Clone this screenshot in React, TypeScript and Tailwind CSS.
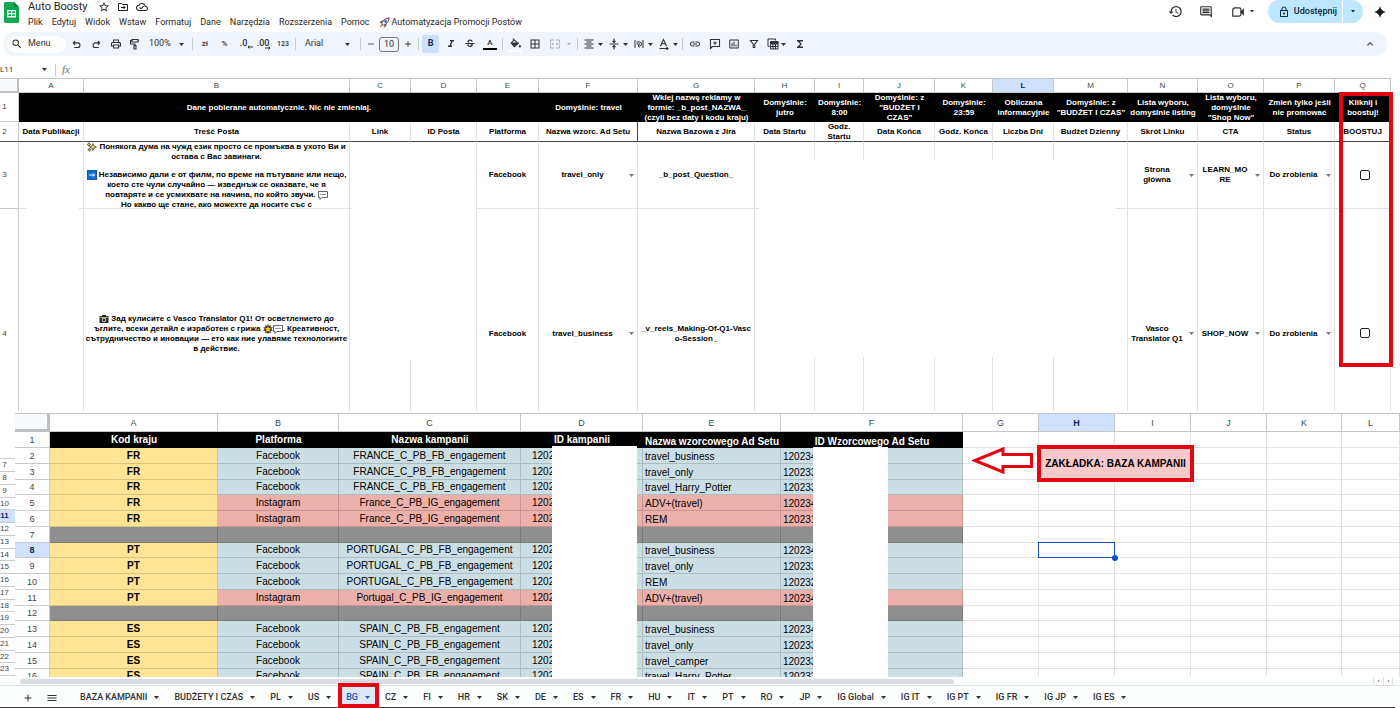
import React from 'react';
import {
  MdAdd,
  MdBorderAll,
  MdFormatAlignCenter,
  MdFormatItalic,
  MdFunctions,
  MdHistory,
  MdInsertChartOutlined,
  MdKeyboardArrowUp,
  MdLink,
  MdMenu,
  MdOutlineCloudDone,
  MdOutlineInsertComment,
  MdOutlineLock,
  MdOutlinePrint,
  MdRemove,
  MdSearch,
  MdStarOutline,
  MdStrikethroughS,
} from 'react-icons/md';

type SvgProps = { className?: string; children: React.ReactNode; box?: string };

function Svg({ className = 'size-3', children, box = '0 0 24 24' }: SvgProps) {
  return (
    <svg viewBox={box} className={className} fill="none" stroke="currentColor" strokeWidth="2" aria-hidden="true">
      {children}
    </svg>
  );
}

function Caret({ size = 'w-[5px]', className = '' }: { size?: string; className?: string }) {
  return (
    <svg viewBox="0 0 10 6" className={`shrink-0 ${size} ${className}`} fill="currentColor" aria-hidden="true">
      <path d="M0 0h10L5 6z" />
    </svg>
  );
}

function Divider({ className = 'mx-[2px]' }: { className?: string }) {
  return <span className={`h-3 w-px shrink-0 bg-[#c7cbd1] ${className}`} />;
}

function Tool({ label, className = 'w-5', children }: { label: string; className?: string; children: React.ReactNode }) {
  return (
    <button type="button" aria-label={label} className={`flex h-[18px] shrink-0 items-center justify-center ${className}`}>
      {children}
    </button>
  );
}

/* ---------- small drawings ---------- */

const SheetsLogo = () => (
  <svg viewBox="0 0 15 21" className="h-[21px] w-[15px]" aria-hidden="true">
    <path d="M1.5 0H10l5 5v14.5a1.5 1.5 0 0 1-1.5 1.5h-12A1.5 1.5 0 0 1 0 19.500v-18A1.500 1.500 0 0 1 1.500 0z" fill="#12a84f" />
    <path d="M10 0l5 5h-5z" fill="#0b7f3a" />
    <path d="M3 8h9v7.500H3z" fill="#fff" />
    <path d="M4.300 9.300h2.700v1.800H4.300zM8.100 9.300h2.700v1.800H8.100zM4.300 12.300h2.700v1.800H4.300zM8.100 12.300h2.700v1.800H8.100z" fill="#12a84f" />
  </svg>
);

const FolderMove = () => (
  <Svg className="size-3">
    <path d="M3 5h6l2 2h10v12H3z" />
    <path d="M8 13h8M13 10l3 3-3 3" />
  </Svg>
);

const Undo = () => (
  <Svg className="size-[11px]">
    <path d="M9 4L5 8.500l4 4.500M5 8.500h9.500a5 5 0 0 1 0 10H7" strokeWidth="2.400" />
  </Svg>
);

const Redo = () => (
  <Svg className="size-[11px]">
    <path d="M15 4l4 4.500-4 4.500M19 8.500H9.500a5 5 0 0 0 0 10H17" strokeWidth="2.400" />
  </Svg>
);

const PaintRoller = () => (
  <Svg className="size-3">
    <path d="M6 3h12v5H6zM6 5H3v7h9v3M10 15h4v7h-4zM18 5h2" strokeWidth="2.200" />
  </Svg>
);

const MergeCells = () => (
  <Svg className="size-3">
    <path d="M10 4H3v5M14 4h7v5M10 20H3v-5M14 20h7v-5M2 12h7M22 12h-7M7 10l2 2-2 2M17 10l-2 2 2 2" />
  </Svg>
);

const AlignMiddle = () => (
  <Svg className="size-3">
    <path d="M3 12h18M12 1v7M9 6l3 3 3-3M12 23v-7M9 18l3-3 3 3" strokeWidth="2.200" />
  </Svg>
);

const WrapText = () => (
  <Svg className="size-3">
    <path d="M4 4v16M20 4v16M7 12h7M7 8h6a4 4 0 0 1 0 8h-2M13 13l-3 3 3 3" />
  </Svg>
);

const RotateText = () => (
  <Svg className="size-3">
    <path d="M5 16L11 3l6 13M7.500 11.500h7M3 21h17M17 18l3 3-3 3" strokeWidth="2.200" />
  </Svg>
);

const PaintBucket = () => (
  <Svg className="size-[13px]">
    <path d="M7 3l10 9-7 6-6-7 6-6" />
    <path d="M5 11h11l-6 6z" fill="currentColor" />
    <path d="M20 14c1.500 2 2 2.800 2 3.500a2 2 0 0 1-4 0c0-.7.500-1.500 2-3.500z" fill="currentColor" stroke="none" />
  </Svg>
);

const AddComment = () => (
  <Svg className="size-3">
    <path d="M3 3h18v14H7l-4 4zM12 6.500v7M8.500 10h7" strokeWidth="2.200" />
  </Svg>
);

const Filter = () => (
  <Svg className="size-3">
    <path d="M5 5h14l-5.500 7.500V19h-3v-6.500z" strokeWidth="2.200" />
  </Svg>
);

const TableView = () => (
  <Svg className="size-3">
    <path d="M5 17H2V2h15v3" />
    <path d="M7 7h15v15H7zM7 12h15M12 12v10M17 12v10M7 17h15" />
    <path d="M7 7h15v4H7z" fill="currentColor" />
  </Svg>
);

const Camera = () => (
  <Svg className="size-[14px]">
    <path d="M7 5h7a3 3 0 0 1 3 3v8a3 3 0 0 1-3 3H3V9a4 4 0 0 1 4-4z" />
    <path d="M17 12l4-4v8z" fill="currentColor" />
  </Svg>
);

const Spark = () => (
  <svg viewBox="0 0 24 24" className="size-3" fill="#1b1c1d" aria-hidden="true">
    <path d="M12 0c1.200 6.500 5.500 10.800 12 12-6.500 1.200-10.800 5.500-12 12-1.200-6.500-5.500-10.800-12-12C6.500 10.800 10.800 6.500 12 0z" />
  </svg>
);

const Rocket = () => (
  <svg viewBox="0 0 20 20" className="size-[11px]" aria-hidden="true">
    <path d="M6 9L1.500 10.500 4 7.500l5-1zM11 14l-1.500 4.500 3-2.500 1-5z" fill="#c62828" stroke="#222" strokeWidth=".8" />
    <path d="M5 12C7 6 11 2.500 18.500 1.500 17.500 9 14 13 8 15z" fill="#e3eef5" stroke="#263845" strokeWidth="1.500" />
    <path d="M14 2.400c1.500-.5 3-.8 4.500-.9-.1 1.500-.4 3-.9 4.500z" fill="#e53935" />
    <circle cx="12" cy="8" r="2" fill="#1e88c8" stroke="#263845" />
    <path d="M5 13l-3 5 5-3z" fill="#f6a623" stroke="#b4521b" />
  </svg>
);

const emoji = 'inline-block h-[10px] w-[10px] align-top';

const Sparkles = () => (
  <svg viewBox="0 0 20 20" className={emoji} aria-hidden="true">
    <path d="M12 3l2 5 5 2-5 2-2 5-2-5-5-2 5-2z" fill="#ffd43b" stroke="#222" strokeWidth="1.300" />
    <path d="M4 1l1 2.500L8 5 5 6 4 9 3 6 0 5l3-1.500zM5 12l1 2.500 2.500 1L6 16.500 5 19l-1-2.500-2.500-1L4 14.500z" fill="#ffd43b" stroke="#222" strokeWidth="1.200" />
  </svg>
);

const ArrowSquare = () => (
  <svg viewBox="0 0 20 20" className={emoji} aria-hidden="true">
    <rect x=".7" y=".7" width="18.600" height="18.600" fill="#0b6fd6" stroke="#083a75" strokeWidth="1.400" />
    <path d="M4 10h11M12 7l3 3-3 3" stroke="#fff" strokeWidth="2" fill="none" />
  </svg>
);

const Speech = () => (
  <svg viewBox="0 0 20 20" className={emoji} aria-hidden="true">
    <path d="M1 3h18v12H8l-4 4v-4H1z" fill="#fff" stroke="#333" strokeWidth="1.500" />
    <path d="M5 9h2M9 9h2M13 9h2" stroke="#333" strokeWidth="2" />
  </svg>
);

const PhotoCamera = () => (
  <svg viewBox="0 0 20 20" className={emoji} aria-hidden="true">
    <path d="M1 4h5V2h8v2h5v14H1z" fill="#2b2b2b" />
    <path d="M2 6h16v2H2z" fill="#b8a56a" />
    <circle cx="10" cy="12" r="4.500" fill="#c9c9c9" />
    <circle cx="10" cy="12" r="2.500" fill="#222" />
  </svg>
);

const GlowStar = () => (
  <svg viewBox="0 0 20 20" className={emoji} aria-hidden="true">
    <path d="M10 0l2 4 4-2-1 4.500 5 .5-3.500 3 3.500 3-5 1 1 4.500-4-1.500-2 3.500-2-3.500-4 1.500 1-4.500-5-1 3.500-3L0 7l5-.5L4 2l4 2z" fill="#3a3320" />
    <path d="M10 4l1.800 4 4.200.5-3 3 .8 4.500-3.800-2-3.800 2 .8-4.500-3-3L8.200 8z" fill="#ffd400" />
  </svg>
);

/* ---------- application bar ---------- */

const menus = ['Plik', 'Edytuj', 'Widok', 'Wstaw', 'Formatuj', 'Dane', 'Narzędzia', 'Rozszerzenia', 'Pomoc'];

function AppBar() {
  return (
    <header className="flex shrink-0 items-start pl-1 text-[#1f1f1f]">
      <a href="#home" aria-label="Arkusze" className="mt-[2px] shrink-0">
        <SheetsLogo />
      </a>
      <div className="ml-[9px] min-w-0 flex-1">
        <div className="flex h-[14px] items-center">
          <h1 className="text-[11px] leading-[14px]">Auto Boosty</h1>
          <button type="button" aria-label="Oznacz gwiazdką" className="ml-[10px]"><MdStarOutline className="size-3" /></button>
          <button type="button" aria-label="Przenieś" className="ml-[7px]"><FolderMove /></button>
          <button type="button" aria-label="Stan dokumentu" className="ml-[7px]"><MdOutlineCloudDone className="size-3" /></button>
        </div>
        <nav className="flex h-4 items-center gap-[9px] text-[9px] leading-4 whitespace-nowrap">
          {menus.map((m) => (
            <button type="button" key={m}>{m}</button>
          ))}
          <button type="button" className="flex items-center gap-[2px]"><Rocket />Automatyzacja Promocji Postów</button>
        </nav>
      </div>
      <div className="flex h-[23px] shrink-0 items-center pr-[14px] text-[#303134]">
        <button type="button" aria-label="Historia"><MdHistory className="size-[15px]" /></button>
        <button type="button" aria-label="Komentarze" className="ml-4"><MdOutlineInsertComment className="size-[14px]" /></button>
        <button type="button" aria-label="Rozmowa wideo" className="ml-[18px] flex items-center gap-[5px]"><Camera /><Caret size="w-1" /></button>
        <div className="ml-[14px] flex h-[23px] items-center rounded-full bg-[#bfe6ff] text-[#06263d]">
          <button type="button" className="flex items-center gap-1 pl-[10px] pr-[5px] text-[9px] font-medium"><MdOutlineLock className="size-3" />Udostępnij</button>
          <span className="h-full w-px bg-white" />
          <button type="button" aria-label="Opcje udostępniania" className="flex w-5 items-center justify-center"><Caret size="w-1" /></button>
        </div>
        <button type="button" aria-label="Gemini" className="ml-[11px]"><Spark /></button>
      </div>
    </header>
  );
}

function Toolbar() {
  return (
    <div className="ml-[3px] mt-[2px] mr-[13px] flex h-6 shrink-0 items-center rounded-full bg-[#f0f4fc] pl-1 text-[9px] text-[#303134]">
      <button type="button" className="flex h-[17px] w-[59px] shrink-0 items-center gap-[5px] rounded-full bg-white pl-1"><MdSearch className="size-3" />Menu</button>
      <Tool label="Cofnij"><Undo /></Tool>
      <Tool label="Ponów"><Redo /></Tool>
      <Tool label="Drukuj" className="w-[19px]"><MdOutlinePrint className="size-3" /></Tool>
      <Tool label="Maluj format" className="w-[19px]"><PaintRoller /></Tool>
      <select aria-label="Powiększenie" className="ml-[5px] w-[28px] appearance-none bg-transparent text-[9px] outline-none"><option>100%</option></select>
      <Caret className="ml-[2px]" />
      <Divider className="ml-2 mr-[2px]" />
      <Tool label="Format walutowy"><span className="text-[8px] font-medium">zł</span></Tool>
      <Tool label="Format procentowy" className="w-[19px]"><span className="text-[8px] font-medium">%</span></Tool>
      <Tool label="Mniej miejsc dziesiętnych" className="relative w-[19px]">
        <span className="pb-[2px] text-[9px] leading-none font-medium">.0</span>
        <Svg className="absolute right-0 bottom-[3px] size-[6px]" box="0 0 12 12"><path d="M12 6H2M5 3L2 6l3 3" /></Svg>
      </Tool>
      <Tool label="Więcej miejsc dziesiętnych" className="relative w-5">
        <span className="pb-[2px] text-[9px] leading-none font-medium">.00</span>
        <Svg className="absolute right-[2px] bottom-[2px] size-[6px]" box="0 0 12 12"><path d="M0 6h10M7 3l3 3-3 3" /></Svg>
      </Tool>
      <Tool label="Więcej formatów"><span className="text-[7px] font-medium">123</span></Tool>
      <Divider />
      <select aria-label="Czcionka" className="ml-[7px] w-[38px] appearance-none bg-transparent text-[9px] outline-none"><option>Arial</option></select>
      <Caret className="ml-[2px]" />
      <Divider className="ml-[10px] mr-[2px]" />
      <Tool label="Zmniejsz czcionkę" className="w-4"><MdRemove className="size-[10px]" /></Tool>
      <input aria-label="Rozmiar czcionki" defaultValue="10" className="h-[15px] w-5 rounded-[3px] border border-[#747775] bg-transparent text-center text-[9px] outline-none" />
      <Tool label="Zwiększ czcionkę" className="w-[18px]"><MdAdd className="size-[10px]" /></Tool>
      <Divider className="mx-px" />
      <Tool label="Pogrubienie" className="mx-[2px] w-[17px] rounded-[2px] bg-[#cfe0fc]"><b className="text-[9px] text-[#0b2a5c]">B</b></Tool>
      <Tool label="Kursywa" className="w-[19px]"><MdFormatItalic className="size-3" /></Tool>
      <Tool label="Przekreślenie"><MdStrikethroughS className="size-3" /></Tool>
      <Tool label="Kolor tekstu"><span className="w-[14px] border-b-2 border-black text-center text-[8px] leading-[10px] font-medium">A</span></Tool>
      <Divider />
      <Tool label="Kolor wypełnienia"><span className="flex w-[13px] justify-center border-b-2 border-white"><PaintBucket /></span></Tool>
      <Tool label="Obramowanie"><MdBorderAll className="size-3" /></Tool>
      <Tool label="Scal komórki" className="w-[30px] gap-[6px] text-[#a9adb3]"><MergeCells /><Caret size="w-1" /></Tool>
      <Divider />
      <Tool label="Wyrównanie w poziomie" className="w-[25px] gap-[3px]"><MdFormatAlignCenter className="size-3" /><Caret /></Tool>
      <Tool label="Wyrównanie w pionie" className="w-[25px] gap-[3px]"><AlignMiddle /><Caret /></Tool>
      <Tool label="Zawijanie tekstu" className="w-[25px] gap-[3px]"><WrapText /><Caret /></Tool>
      <Tool label="Obrót tekstu" className="w-[25px] gap-[3px]"><RotateText /><Caret /></Tool>
      <Divider />
      <Tool label="Wstaw link"><MdLink className="size-3" /></Tool>
      <Tool label="Wstaw komentarz" className="w-[19px]"><AddComment /></Tool>
      <Tool label="Wstaw wykres"><MdInsertChartOutlined className="size-3" /></Tool>
      <Tool label="Utwórz filtr" className="w-[19px]"><Filter /></Tool>
      <Tool label="Widoki filtrów" className="w-[27px] gap-[2px]"><TableView /><Caret /></Tool>
      <Tool label="Funkcje" className="w-5"><MdFunctions className="size-3" /></Tool>
      <Tool label="Ukryj menu" className="mr-[7px] ml-auto w-5"><MdKeyboardArrowUp className="size-3" /></Tool>
    </div>
  );
}

function FormulaBar() {
  return (
    <div className="flex h-[22px] shrink-0 items-center pt-[5px] text-[8px] text-[#303134]">
      <input aria-label="Pole nazwy" defaultValue="L11" className="h-4 w-[42px] bg-transparent leading-4 outline-none" />
      <Caret />
      <Divider className="ml-2 mr-[6px]" />
      <span className="font-['Liberation_Serif',serif] text-[11px] text-[#6b6f74] italic">fx</span>
      <input aria-label="Formuła" className="ml-2 h-4 flex-1 bg-transparent outline-none" />
    </div>
  );
}

/* ---------- upper sheet ---------- */

const upperColumns: [string, string][] = [
  ['A', 'w-[65px]'], ['B', 'w-[266px]'], ['C', 'w-[61px]'], ['D', 'w-[66px]'], ['E', 'w-[62px]'], ['F', 'w-[99px]'],
  ['G', 'w-[117px]'], ['H', 'w-[60px]'], ['I', 'w-[49px]'], ['J', 'w-[71px]'], ['K', 'w-[58px]'], ['L', 'w-[61px]'],
  ['M', 'w-[74px]'], ['N', 'w-[70px]'], ['O', 'w-[66px]'], ['P', 'w-[71px]'], ['Q', 'w-[56px]'],
];

const hints: string[][] = [
  ['Domyślnie: travel'],
  ['Wklej nazwę reklamy w', 'formie: _b_post_NAZWA_', '(czyli bez daty i kodu kraju)'],
  ['Domyślnie:', 'jutro'],
  ['Domyślnie:', '8:00'],
  ['Domyślnie: z', '"BUDŻET I', 'CZAS"'],
  ['Domyślnie:', '23:59'],
  ['Obliczana', 'informacyjnie'],
  ['Domyślnie: z', '"BUDŻET I CZAS"'],
  ['Lista wyboru,', 'domyślnie listing'],
  ['Lista wyboru,', 'domyślnie', '"Shop Now"'],
  ['Zmień tylko jeśli', 'nie promować'],
  ['Kliknij i', 'boostuj!'],
];

const titles: string[][] = [
  ['Data Publikacji'], ['Treść Posta'], ['Link'], ['ID Posta'], ['Platforma'], ['Nazwa wzorc. Ad Setu'],
  ['Nazwa Bazowa z Jira'], ['Data Startu'], ['Godz.', 'Startu'], ['Data Końca'], ['Godz. Końca'], ['Liczba Dni'],
  ['Budżet Dzienny'], ['Skrót Linku'], ['CTA'], ['Status'], ['BOOSTUJ'],
];

function Lines({ lines }: { lines: React.ReactNode[] }) {
  return (
    <>
      {lines.map((l, i) => (
        <span key={i} className="block text-center whitespace-nowrap">{l}</span>
      ))}
    </>
  );
}

function Picker({ label, lines }: { label: string; lines: string[] }) {
  return (
    <div className="flex items-center gap-[3px] pr-[3px]">
      {lines.length > 1 ? (
        <button type="button" aria-haspopup="listbox" aria-label={label} className="min-w-0 flex-1 font-bold"><Lines lines={lines} /></button>
      ) : (
        <select aria-label={label} className="min-w-0 flex-1 appearance-none bg-transparent text-center font-bold outline-none [text-align-last:center]">
          <option>{lines[0]}</option>
        </select>
      )}
      <Caret className="text-[#777]" />
    </div>
  );
}

type Post = { n: number; text: React.ReactNode; adSet: string; name: string[]; link: string[]; cta: string[] };

const posts: Post[] = [
  {
    n: 3,
    text: (
      <div className="h-[66px]">
        <Lines lines={[<><Sparkles /> Понякога дума на чужд език просто се промъква в ухото Ви и</>, 'остава с Вас завинаги.']} />
        <div className="h-2" />
        <Lines
          lines={[
            <><ArrowSquare /> Независимо дали е от филм, по време на пътуване или нещо,</>,
            'което сте чули случайно — изведнъж се оказвате, че я',
            <>повтаряте и се усмихвате на начина, по който звучи. <Speech /></>,
            'Но какво ще стане, ако можехте да носите със с',
          ]}
        />
      </div>
    ),
    adSet: 'travel_only',
    name: ['_b_post_Question_'],
    link: ['Strona', 'główna'],
    cta: ['LEARN_MO', 'RE'],
  },
  {
    n: 4,
    text: (
      <Lines
        lines={[
          <><PhotoCamera /> Зад кулисите с Vasco Translator Q1! От осветлението до</>,
          <>ъглите, всеки детайл е изработен с грижа <GlowStar /><Speech />. Креативност,</>,
          'сътрудничество и иновации — ето как ние улавяме технологиите',
          'в действие.',
        ]}
      />
    ),
    adSet: 'travel_business',
    name: ['_v_reels_Making-Of-Q1-Vasc', 'o-Session_'],
    link: ['Vasco', 'Translator Q1'],
    cta: ['SHOP_NOW'],
  },
];

function UpperSheet() {
  const headCell = 'border-t border-r border-b border-[#c4c7c5] p-0 font-normal';
  const rowHead = 'border-r border-b border-[#c9cbce] p-0 pr-[9px] text-center font-normal text-[#444746]';
  const cell = 'border-r border-b border-[#e1e3e3] p-0';
  return (
    <section className="relative shrink-0 overflow-hidden" aria-label="Posty">
      <table className="w-full table-fixed border-separate border-spacing-0 text-[8px] leading-[10px] font-bold text-black">
        <colgroup>
          <col className="w-[19px]" />
          {upperColumns.map(([c, w]) => <col key={c} className={w} />)}
          <col />
        </colgroup>
        <thead>
          <tr className="h-[15px] text-[#444746]">
            <th aria-label="Zaznacz wszystko" className="border-t border-r-2 border-b-2 border-t-[#c4c7c5] border-r-[#bcbec0] border-b-[#bcbec0] bg-[#f8f9fa] p-0" />
            {upperColumns.map(([c]) => (
              <th key={c} className={`${headCell} ${c === 'L' ? 'bg-[#cfe1fd]' : ''}`}>
                <span className={c === 'L' ? 'font-bold text-[#0b2a5c]' : ''}>{c}</span>
              </th>
            ))}
            <th aria-label="Koniec" className="p-0" />
          </tr>
        </thead>
        <tbody>
          <tr className="h-[29px] text-white">
            <th className={rowHead}>1</th>
            <td colSpan={5} className="bg-black p-0 text-center">Dane pobierane automatycznie. Nic nie zmieniaj.</td>
            {hints.map((h, i) => (
              <td key={i} className="bg-black p-0"><div className="flex h-[29px] flex-col justify-center"><Lines lines={h} /></div></td>
            ))}
          </tr>
          <tr className="h-5">
            <th className={`${rowHead} border-b-[#555]`}>2</th>
            {titles.map((t, i) => (
              <td key={i} className={`border-r border-b border-b-[#444] p-0 ${i === 5 ? 'border-r-[#444]' : 'border-r-[#e1e3e3]'}`}>
                <div className="flex h-[19px] flex-col justify-center"><Lines lines={t} /></div>
              </td>
            ))}
          </tr>
          {posts.map((p) => {
            const tall = p.n === 4;
            const c = tall ? 'border-r border-[#e1e3e3] p-0 pt-[47px]' : cell;
            return (
              <tr key={p.n} className={tall ? 'h-[202px]' : 'h-[67px]'}>
                <th className={tall ? 'border-r border-[#c9cbce] p-0 pt-[47px] pr-[9px] text-center font-normal text-[#444746]' : rowHead}>{p.n}</th>
                <td className={c} />
                <td className={c}>{p.text}</td>
                <td className={c} />
                <td className={c} />
                <td className={`${c} text-center`}>Facebook</td>
                <td className={c}><Picker label="Nazwa wzorcowego Ad Setu" lines={[p.adSet]} /></td>
                <td className={c}><Lines lines={p.name} /></td>
                <td className={c} />
                <td className={c} />
                <td className={c} />
                <td className={c} />
                <td className={c} />
                <td className={c} />
                <td className={c}><Picker label="Skrót Linku" lines={p.link} /></td>
                <td className={c}><Picker label="CTA" lines={p.cta} /></td>
                <td className={c}><Picker label="Status" lines={['Do zrobienia']} /></td>
                <td className={`${c} pl-1 text-center`}>
                  <input type="checkbox" aria-label={`Boostuj wiersz ${p.n}`} className="size-[10px] appearance-none rounded-[2px] border border-[#222] bg-white align-middle" />
                </td>
              </tr>
            );
          })}
        </tbody>
      </table>
      <div className="absolute top-[70px] left-[27px] h-[200px] w-[52px] bg-white" />
      <div className="absolute top-[66px] left-[352px] h-[216px] w-[124px] bg-white" />
      <div className="absolute top-[82px] left-[759px] h-[197px] w-[356px] bg-white" />
      <div className="absolute top-[14px] left-[1339px] h-[275px] w-[54px] border-4 border-[#e30613]" />
    </section>
  );
}

/* ---------- lower sheet ---------- */

const lowerColumns: [string, string][] = [
  ['A', 'w-[168px]'], ['B', 'w-[121px]'], ['C', 'w-[182px]'], ['D', 'w-[122px]'], ['E', 'w-[138px]'], ['F', 'w-[182px]'],
  ['G', 'w-[76px]'], ['H', 'w-[76px]'], ['I', 'w-[76px]'], ['J', 'w-[76px]'], ['K', 'w-[75px]'], ['L', ''],
];

type Campaign = [country: string, platform: string, name: string, adSet: string, id: string] | null;

const campaigns: Campaign[] = [
  ['FR', 'Facebook', 'FRANCE_C_PB_FB_engagement', 'travel_business', '120234'],
  ['FR', 'Facebook', 'FRANCE_C_PB_FB_engagement', 'travel_only', '120233'],
  ['FR', 'Facebook', 'FRANCE_C_PB_FB_engagement', 'travel_Harry_Potter', '120233'],
  ['FR', 'Instagram', 'France_C_PB_IG_engagement', 'ADV+(travel)', '120234'],
  ['FR', 'Instagram', 'France_C_PB_IG_engagement', 'REM', '120231'],
  null,
  ['PT', 'Facebook', 'PORTUGAL_C_PB_FB_engagement', 'travel_business', '120234'],
  ['PT', 'Facebook', 'PORTUGAL_C_PB_FB_engagement', 'travel_only', '120233'],
  ['PT', 'Facebook', 'PORTUGAL_C_PB_FB_engagement', 'REM', '120232'],
  ['PT', 'Instagram', 'Portugal_C_PB_IG_engagement', 'ADV+(travel)', '120234'],
  null,
  ['ES', 'Facebook', 'SPAIN_C_PB_FB_engagement', 'travel_business', '120234'],
  ['ES', 'Facebook', 'SPAIN_C_PB_FB_engagement', 'travel_only', '120233'],
  ['ES', 'Facebook', 'SPAIN_C_PB_FB_engagement', 'travel_camper', '120233'],
  ['ES', 'Facebook', 'SPAIN_C_PB_FB_engagement', 'travel_Harry_Potter', '120233'],
];

const blanks = ['G', 'H', 'I', 'J', 'K', 'L'];

function CampaignCells({ row }: { row: Campaign }) {
  const base = 'border-r border-b border-black/15 p-0';
  if (!row) {
    return <>{['A', 'B', 'C', 'D', 'E', 'F'].map((c) => <td key={c} className={`${base} bg-[#8f8f8f]`} />)}</>;
  }
  const tone = row[1] === 'Instagram' ? 'bg-[#ebb0aa]' : 'bg-[#cbdee4]';
  return (
    <>
      <td className={`${base} bg-[#fee494] text-center font-bold`}>{row[0]}</td>
      <td className={`${base} ${tone} text-center`}>{row[1]}</td>
      <td className={`${base} ${tone} text-center`}>{row[2]}</td>
      <td className={`${base} ${tone} pl-[11px]`}>12023</td>
      <td className={`${base} ${tone} pl-[2px] align-bottom`}>{row[3]}</td>
      <td className={`${base} ${tone} pl-[2px] align-bottom`}>{row[4]}</td>
    </>
  );
}

function LowerSheet() {
  const rowHead = 'border-r border-b border-[#c9cbce] p-0 text-center text-[9px] font-normal text-[#444746]';
  const black = 'bg-black p-0 text-center font-bold text-white';
  return (
    <section className="relative min-w-0 flex-1 pt-[2px]" aria-label="Baza kampanii">
      <table className="w-full table-fixed border-separate border-spacing-0 bg-white text-[10px] leading-3 text-black">
        <colgroup>
          <col className="w-[35px]" />
          {lowerColumns.map(([c, w]) => <col key={c} className={w} />)}
        </colgroup>
        <thead>
          <tr className="h-[19px] text-[9px] text-[#444746]">
            <th aria-label="Zaznacz wszystko" className="border-t border-r-[3px] border-b-[3px] border-t-[#c4c7c5] border-r-[#bcbec0] border-b-[#bcbec0] bg-[#f8f9fa] p-0" />
            {lowerColumns.map(([c]) => (
              <th key={c} className={`border-t border-r border-b border-[#c4c7c5] p-0 ${c === 'H' ? 'bg-[#cfe1fd] font-bold text-[#0b2a5c]' : 'font-normal'}`}>{c}</th>
            ))}
          </tr>
        </thead>
        <tbody>
          <tr className="h-4">
            <th className={rowHead}>1</th>
            <td className={black}>Kod kraju</td>
            <td className={black}>Platforma</td>
            <td className={black}>Nazwa kampanii</td>
            <td className={black}>ID kampanii</td>
            <td className={`${black} align-bottom`}>Nazwa wzorcowego Ad Setu</td>
            <td className={`${black} align-bottom`}>ID Wzorcowego Ad Setu</td>
            {blanks.map((b) => <td key={b} className="border-r border-b border-[#e1e3e3] p-0" />)}
          </tr>
          {campaigns.map((row, i) => {
            const n = i + 2;
            return (
              <tr key={n} className={n % 4 === 0 ? 'h-[15px]' : 'h-4'}>
                <th className={`${rowHead} ${n === 8 ? 'bg-[#cfe1fd]' : ''}`}><span className={n === 8 ? 'font-bold text-[#0b2a5c]' : ''}>{n}</span></th>
                <CampaignCells row={row} />
                {blanks.map((b) => (
                  <td key={b} className="relative border-r border-b border-[#e1e3e3] p-0">
                    {n === 8 && b === 'H' && (
                      <>
                        <span className="absolute inset-[-1px] border border-[#1552bd]" />
                        <span className="absolute right-[-4px] bottom-[-4px] z-10 size-[6px] rounded-full bg-[#0b4fc4]" />
                      </>
                    )}
                  </td>
                ))}
              </tr>
            );
          })}
        </tbody>
      </table>
      <div className="absolute top-[35px] bottom-0 left-[537px] w-[85px] bg-white" />
      <div className="absolute top-[36px] bottom-0 left-[798px] w-[75px] bg-white" />
      <svg viewBox="0 0 62 30" className="absolute top-[35px] left-[957px] h-[30px] w-[62px]" aria-hidden="true">
        <path d="M3 14.500L31 3v5.500h28.500v12H31V26z" fill="#fff" stroke="#e30613" strokeWidth="3" />
      </svg>
      <div className="absolute top-[34px] left-[1022px] flex h-[37px] w-[157px] items-center justify-center border-4 border-[#e30613] bg-[#f8c9c9] text-[10px] font-bold whitespace-nowrap text-black">
        ZAKŁADKA: BAZA KAMPANII
      </div>
    </section>
  );
}

const railRows = Array.from({ length: 17 }, (_, i) => i + 7);

function RowRail() {
  return (
    <ol className="w-[15px] shrink-0 pt-[47px] text-[8px] leading-3 text-[#444746]">
      <li aria-hidden="true" className="h-px bg-[#c9cbce]" />
      {railRows.map((n) => (
        <li
          key={n}
          className={`border-b border-[#c9cbce] pr-[6px] text-center ${n % 4 === 2 ? 'h-3' : 'h-[13px]'} ${n === 11 ? 'bg-[#cfe1fd] font-bold text-[#0b2a5c]' : ''}`}
        >
          {n}
        </li>
      ))}
    </ol>
  );
}

/* ---------- footer ---------- */

const tabs = [
  'BAZA KAMPANII', 'BUDŻETY I CZAS', 'PL', 'US', 'BG', 'CZ', 'FI', 'HR', 'SK', 'DE', 'ES', 'FR', 'HU', 'IT', 'PT', 'RO', 'JP',
  'IG Global', 'IG IT', 'IG PT', 'IG FR', 'IG JP', 'IG ES',
];

function Footer() {
  return (
    <footer className="relative shrink-0 bg-[#fdfefe]">
      <div className="flex h-[9px] items-center border-b border-[#dfe1e3] pr-[7px] pl-5">
        <span className="h-[5px] w-[934px] rounded-full bg-[#dadbe0]" />
        <span className="ml-auto flex h-full text-[#777]">
          <button type="button" aria-label="W lewo" className="flex w-[10px] items-center justify-center border-l border-[#dfe1e3]"><Caret size="w-[3px]" className="rotate-90" /></button>
          <button type="button" aria-label="W prawo" className="flex w-[10px] items-center justify-center border-x border-[#dfe1e3]"><Caret size="w-[3px]" className="-rotate-90" /></button>
        </span>
      </div>
      <div className="mr-[5px] flex h-[22px] items-center border-b border-[#4a4a4a] pt-[2px] pl-[22px] text-[#303134]">
        <button type="button" aria-label="Dodaj arkusz" className="mr-3"><MdAdd className="size-3" /></button>
        <button type="button" aria-label="Wszystkie arkusze" className="mr-[15px]"><MdMenu className="size-3" /></button>
        <nav className="flex text-[9px] font-medium whitespace-nowrap">
          {tabs.map((t) => (
            <button
              type="button"
              key={t}
              className={`relative isolate flex h-[19px] items-center gap-[7px] pr-2 pl-[7px] ${t === 'BG' ? 'text-[#1756c4]' : ''}`}
            >
              {t}
              <Caret />
              {t === 'BG' && <span className="absolute inset-x-[-1px] -top-[5px] -bottom-px -z-10 border-4 border-[#e30613] bg-[#dfe8f8]" />}
            </button>
          ))}
        </nav>
      </div>
    </footer>
  );
}

export default function App() {
  return (
    <main className="flex h-screen flex-col overflow-hidden bg-white font-['Roboto',sans-serif]">
      <AppBar />
      <Toolbar />
      <FormulaBar />
      <div className="flex min-h-0 flex-1 flex-col font-['Liberation_Sans',Arial,sans-serif]">
        <UpperSheet />
        <div className="flex min-h-0 flex-1 overflow-hidden">
          <RowRail />
          <LowerSheet />
        </div>
      </div>
      <Footer />
    </main>
  );
}
